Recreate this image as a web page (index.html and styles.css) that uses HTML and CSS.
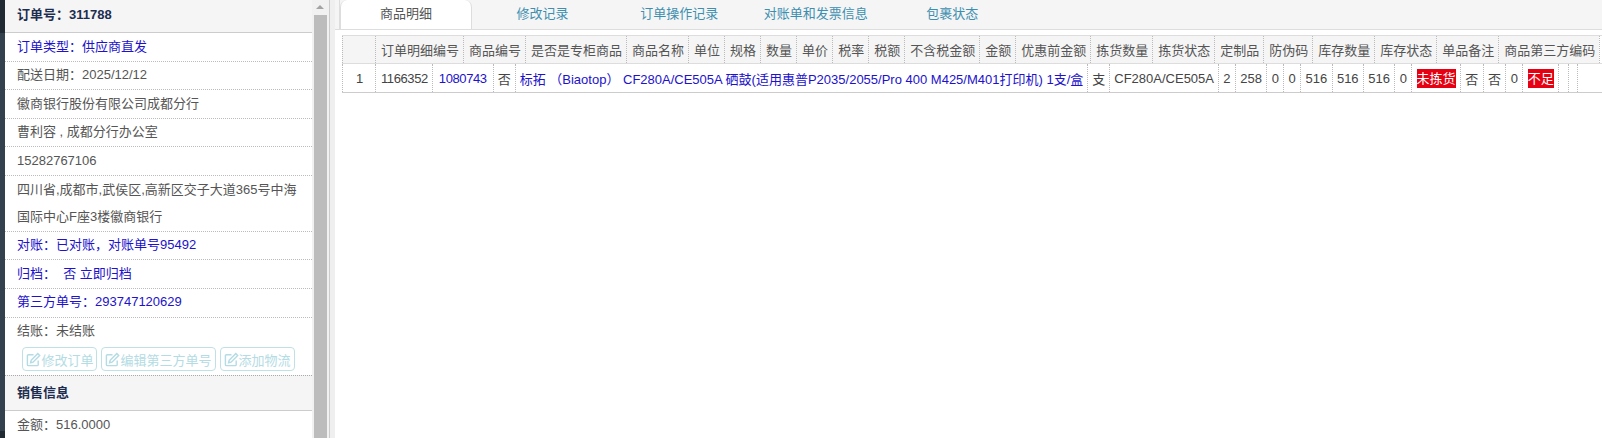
FILE: index.html
```html
<!DOCTYPE html>
<html lang="zh-cn">
<head>
<meta charset="utf-8" />
<title>订单详情</title>
<link rel="stylesheet" href="styles.css">
</head>
<body>
<div class="page">
	<div class="nav_strip"></div>
	<div class="side">
		<div class="side_title">订单号：311788</div>
		<ul class="info_list">
			<li class="blue">订单类型：供应商直发</li>
			<li>配送日期：2025/12/12</li>
			<li>徽商银行股份有限公司成都分行</li>
			<li>曹利容 , 成都分行办公室</li>
			<li>15282767106</li>
			<li class="addr">四川省,成都市,武侯区,高新区交子大道365号中海国际中心F座3楼徽商银行</li>
			<li class="blue">对账：已对账，对账单号95492</li>
			<li class="blue">归档： &nbsp;否 立即归档</li>
			<li class="blue">第三方单号：293747120629</li>
			<li>结账：未结账</li>
		</ul>
		<div class="btn_row">
			<a class="btn"><svg viewBox="0 0 16 16" width="15" height="15"><path d="M13 9v4.5a1 1 0 0 1-1 1H2.5a1 1 0 0 1-1-1V4a1 1 0 0 1 1-1H8" fill="none" stroke="currentColor" stroke-width="1.5"/><path d="M5.5 8.8 12.6 1.7l2 2-7.1 7.1-2.6.6z" fill="none" stroke="currentColor" stroke-width="1.5"/></svg>修改订单</a>
			<a class="btn"><svg viewBox="0 0 16 16" width="15" height="15"><path d="M13 9v4.5a1 1 0 0 1-1 1H2.5a1 1 0 0 1-1-1V4a1 1 0 0 1 1-1H8" fill="none" stroke="currentColor" stroke-width="1.5"/><path d="M5.5 8.8 12.6 1.7l2 2-7.1 7.1-2.6.6z" fill="none" stroke="currentColor" stroke-width="1.5"/></svg>编辑第三方单号</a>
			<a class="btn"><svg viewBox="0 0 16 16" width="15" height="15"><path d="M13 9v4.5a1 1 0 0 1-1 1H2.5a1 1 0 0 1-1-1V4a1 1 0 0 1 1-1H8" fill="none" stroke="currentColor" stroke-width="1.5"/><path d="M5.5 8.8 12.6 1.7l2 2-7.1 7.1-2.6.6z" fill="none" stroke="currentColor" stroke-width="1.5"/></svg>添加物流</a>
		</div>
		<div class="side_title sale">销售信息</div>
		<ul class="info_list">
			<li>金额：516.0000</li>
		</ul>
	</div>
	<div class="scroll_bar">
		<i class="scroll_up"></i>
		<div class="scroll_thumb"></div>
	</div>
	<div class="gutter"></div>
	<div class="main">
		<div class="tabs">
			<span class="tab_gap"></span>
			<a class="tab active">商品明细</a>
			<a class="tab">修改记录</a>
			<a class="tab">订单操作记录</a>
			<a class="tab">对账单和发票信息</a>
			<a class="tab">包裹状态</a>
		</div>
		<div class="grid_head">
			<table>
				<tr>
					<th class="num"></th><th>订单明细编号</th><th>商品编号</th><th>是否是专柜商品</th><th>商品名称</th><th>单位</th><th>规格</th><th>数量</th><th>单价</th><th>税率</th><th>税额</th><th>不含税金额</th><th>金额</th><th>优惠前金额</th><th>拣货数量</th><th>拣货状态</th><th>定制品</th><th>防伪码</th><th>库存数量</th><th>库存状态</th><th>单品备注</th><th>商品第三方编码</th>
				</tr>
			</table>
		</div>
		<div class="grid_body">
			<table>
				<tr>
					<td class="num">1</td><td class="code">1166352</td><td class="blue code wide">1080743</td><td>否</td><td class="blue">标拓 （Biaotop） CF280A/CE505A 硒鼓(适用惠普P2035/2055/Pro 400 M425/M401打印机) 1支/盒</td><td>支</td><td>CF280A/CE505A</td><td>2</td><td>258</td><td>0</td><td>0</td><td>516</td><td>516</td><td>516</td><td>0</td><td><span class="flag">未拣货</span></td><td>否</td><td>否</td><td>0</td><td><span class="flag">不足</span></td><td></td><td></td>
				</tr>
			</table>
		</div>
	</div>
</div>
</body>
</html>
```

FILE: styles.css
```css
html,body{margin:0;padding:0;background:#fff;}
body{font-family:"Liberation Sans","Noto Sans CJK SC",sans-serif;font-size:13px;color:#555;}
ul{list-style:none;margin:0;padding:0;}
a{text-decoration:none;}
.page{display:flex;width:1602px;height:438px;overflow:hidden;}
.nav_strip{flex:0 0 5px;background:linear-gradient(#1f2a33 0,#1f2a33 33px,#33414e 33px,#33414e 431px,#1f2a33 431px);}
.side{flex:0 0 307px;overflow:hidden;}
.side_title{height:32px;line-height:30px;padding-left:12px;background:#f5f5f5;border-bottom:1px solid #ccc;font-weight:bold;color:#1d2d50;}
.side_title.sale{height:34px;line-height:34px;border-top:1px dotted #aaa;border-bottom:1px solid #ccc;}
.info_list li{padding:4.5px 12px 4.5px;line-height:18.57px;border-bottom:1px dotted #bbb;}
.info_list li:last-child{border-bottom:0;}
.info_list li.addr{line-height:27px;padding:0 12px 1px;}
.info_list li.blue,td.blue{color:#2211cc;}
.btn_row{display:flex;justify-content:center;gap:4px;padding:2px 0 4px;height:24px;}
.btn{display:flex;align-items:center;padding:0 3px;border:1px solid #bfe0e6;border-radius:4px;color:#b3dce4;}
.scroll_bar{flex:0 0 17px;background:#f1f1f1;position:relative;}
.scroll_up{position:absolute;top:5px;left:4px;width:0;height:0;border-left:4px solid transparent;border-right:4px solid transparent;border-bottom:4px solid #a3a3a3;}
.scroll_thumb{position:absolute;top:15px;bottom:0;left:2px;width:13px;background:#bcbcbc;}
.gutter{flex:0 0 6px;background:#efefef;border-left:1px solid #ccc;box-sizing:border-box;}
.main{flex:1;min-width:0;}
.tabs{display:flex;gap:6.6px;height:29px;background:#f5f5f5;border-bottom:1px solid #ddd;}
.tab_gap{width:4px;margin-right:-6.6px;border-right:1px solid #ddd;}
.tab{width:130px;text-align:center;line-height:28px;color:#3d8fb0;}
.tab.active{height:29px;background:#fff;border:1px solid #ddd;border-top:0;border-bottom:0;border-top-left-radius:7px;border-top-right-radius:7px;color:#555;box-sizing:border-box;width:132px;margin-right:-1px;}
.grid_head{margin:5px 0 0 7px;background:linear-gradient(#f5f5f5,#f5f5f5) no-repeat left/1257px 100%;border-top:1px solid #ddd;border-bottom:1px solid #ddd;}
.grid_body{margin-left:7px;border-bottom:1px solid #ccc;}
table{border-collapse:separate;border-spacing:0;border-left:1px dotted #bbb;}
th,td{border-right:1px dotted #bbb;padding:0 4px 0 5px;white-space:nowrap;font-weight:normal;}
th{height:27px;color:#555;}
td{height:28px;color:#444;}
td{padding:0 4px;}
td:nth-child(n+8){padding:0 4.35px;}
th.num,td.num{width:23px;padding:0 4px 0 5px;text-align:center;}
td.code{letter-spacing:-.4px;padding:0 4px 0 5px;}
td.code.wide{padding:0 6px;}
.flag{display:inline-block;background:#e60012;color:#fff;line-height:19px;}
```
